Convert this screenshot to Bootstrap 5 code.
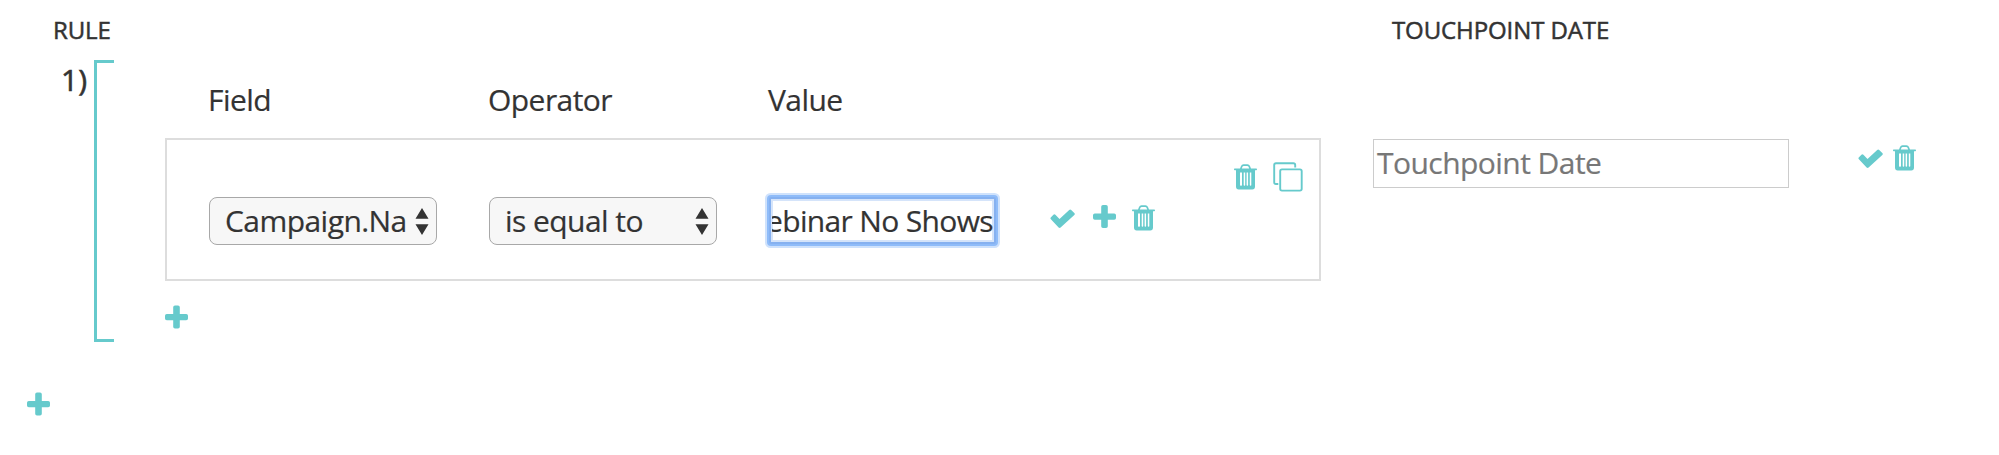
<!DOCTYPE html>
<html lang="en">
<head>
<meta charset="utf-8">
<title>Touchpoint rules</title>
<link href="https://cdn.jsdelivr.net/npm/bootstrap@5.3.0/dist/css/bootstrap.min.css" rel="stylesheet">
<style>
  body { font: 400 30px/40px "Open Sans", sans-serif; letter-spacing: -.55px; -webkit-text-stroke: .2px; color: #333; background: #fff; height: 455px; overflow: hidden; }
  svg { display: block; flex: none; }
  .teal { color: #66cacc; }
  .head-row { height: 60px; padding: 10px 0 0 53px; font-size: 24px; letter-spacing: -.1px; -webkit-text-stroke: .5px #333; white-space: nowrap; }
  .head-rule { width: 1339px; }
  .rule-num { width: 94px; padding: 1px 7px 0 0; line-height: 38px; letter-spacing: 0; -webkit-text-stroke: .6px #333; text-align: right; }
  .bracket { width: 20px; height: 282px; border: 3px solid #66cacc; border-right: 0; }
  .conditions { width: 1156px; margin-left: 51px; }
  .labels { height: 78px; padding: 20px 0 0 43px; }
  .field-col { width: 280px; }
  .cond-card { height: 143px; border: 2px solid #ddd; }
  .pick { width: 228px; height: 48px; padding: 0 7px 0 15px; border: 1.5px solid #a8a8a8; border-radius: 8px; background: #f7f7f7; line-height: 46px; white-space: nowrap; }
  .value-box { width: 227px; height: 47px; padding: 0 1px; border: 2px solid #86b1f0; border-radius: 2px; box-shadow: 0 0 0 2px #8fbcf9, 0 0 0 4px #cfe2fc, inset 0 0 0 2px #d5e4fa; line-height: 43px; background: #fff; white-space: nowrap; }
  .value-text { width: 221px; overflow: hidden; letter-spacing: -.65px; }
  .cond-inner { padding: 57px 0 0 42px; }
  .card-tools { top: 22px; right: 16px; }
  .date-box { width: 416px; height: 49px; margin: 79px 0 0 52px; padding: 0 3px; border: 1px solid #ccc; line-height: 46px; color: #777; }
  .date-tools { margin: 85px 0 0 69px; }
  .add-cond { padding-top: 24px; }
  .add-rule { padding: 50px 0 0 27px; }
</style>
</head>
<body>
<svg width="0" height="0" class="position-absolute">
  <defs>
    <symbol id="i-check" viewBox="0 0 25 19"><path fill="currentColor" d="M1 8.2 3.4 5.8q1-1 2 0L9.5 9.9 19.2.9q1-1 2 0L24.300 4q1 1 0 2L10.600 18.500q-1 .9-2 0L.9 10.300q-1-1 .1-2.100z"/></symbol>
    <symbol id="i-plus" viewBox="0 0 23 23"><path fill="currentColor" d="M10 0h3q1.800 0 1.800 1.800V8.500h6.400q1.800 0 1.800 1.800v2.700q0 1.800-1.800 1.800h-6.400v6.400q0 1.800-1.800 1.800h-3q-1.800 0-1.800-1.800v-6.400H1.800Q0 14.800 0 13v-2.700q0-1.800 1.800-1.800h6.400V1.800Q8.200 0 10 0z"/></symbol>
    <symbol id="i-trash" viewBox="0 0 23 26"><path fill="currentColor" fill-rule="evenodd" d="M.7 4.500H6L7 2Q7.700.3 9.500.3h4Q15.300.3 16 2l1 2.500h5.300q.7 0 .7.800t-.7.900h-1.300V22.500q0 3-2.700 3H4.700q-2.700 0-2.700-3V6.200H.7Q0 6.200 0 5.300t.7-.8zM7.800 4.500h7.400l-.8-1.900q-.3-.7-1.100-.7H9.700q-.8 0-1.100.7zM6 8.600V21q0 .7.700.7h.6q.7 0 .7-.7V8.600zM9.700 8.600V21q0 .7.700.7h.1q.7 0 .7-.7V8.600zM12.600 8.600V21q0 .7.700.7h.1q.7 0 .7-.7V8.600zM15.800 8.600V21q0 .7.700.7h.1q.7 0 .7-.7V8.600z"/></symbol>
    <symbol id="i-copy" viewBox="0 0 30 30"><g fill="none" stroke="currentColor" stroke-width="1.900"><path d="M22.200 5.500V3Q22.200 1.200 20.400 1.200H3Q1.200 1.200 1.200 3v17.200Q1.200 22 3 22h2.300"/><rect x="7.200" y="7.400" width="21.500" height="21.200" rx="1.800"/></g></symbol>
    <symbol id="i-sort" viewBox="0 0 14 27"><path fill="currentColor" d="M7 0l6.500 10.700H.5zM7 27 .5 16.300h13z"/></symbol>
  </defs>
</svg>

<header class="head-row d-flex">
  <div class="head-rule">RULE</div>
  <div>TOUCHPOINT DATE</div>
</header>

<main class="d-flex align-items-start">
  <div class="rule-num">1)</div>
  <div class="bracket"></div>
  <section class="conditions">
    <div class="labels d-flex">
      <div class="field-col">Field</div>
      <div class="field-col">Operator</div>
      <div class="field-col">Value</div>
    </div>
    <div class="cond-card position-relative">
      <div class="cond-inner d-flex">
        <div class="field-col">
          <div class="pick d-flex align-items-center justify-content-between"><span>Campaign.Na</span><svg width="14" height="27"><use href="#i-sort"/></svg></div>
        </div>
        <div class="field-col">
          <div class="pick d-flex align-items-center justify-content-between"><span>is equal to</span><svg width="14" height="27"><use href="#i-sort"/></svg></div>
        </div>
        <div class="field-col">
          <div class="value-box d-flex"><div class="value-text d-flex justify-content-end"><span>ebinar No Shows</span></div></div>
        </div>
        <div class="d-flex align-items-start teal pt-2 ps-0">
          <svg width="25" height="19" style="margin:4px 0 0 1px"><use href="#i-check"/></svg>
          <svg width="23" height="23" style="margin-left:18px"><use href="#i-plus"/></svg>
          <svg width="23" height="26" style="margin-left:16px"><use href="#i-trash"/></svg>
        </div>
      </div>
      <div class="card-tools position-absolute d-flex teal">
        <svg width="23" height="26" style="margin:2px 16px 0 0"><use href="#i-trash"/></svg>
        <svg width="30" height="30"><use href="#i-copy"/></svg>
      </div>
    </div>
    <div class="add-cond teal"><svg width="23" height="24"><use href="#i-plus"/></svg></div>
  </section>
  <div class="date-box">Touchpoint Date</div>
  <div class="date-tools d-flex teal">
    <svg width="25" height="19" style="margin:4px 10px 0 0"><use href="#i-check"/></svg>
    <svg width="23" height="26"><use href="#i-trash"/></svg>
  </div>
</main>
<div class="add-rule teal"><svg width="23" height="24"><use href="#i-plus"/></svg></div>
<script src="https://cdn.jsdelivr.net/npm/bootstrap@5.3.0/dist/js/bootstrap.bundle.min.js"></script>
</body>
</html>
